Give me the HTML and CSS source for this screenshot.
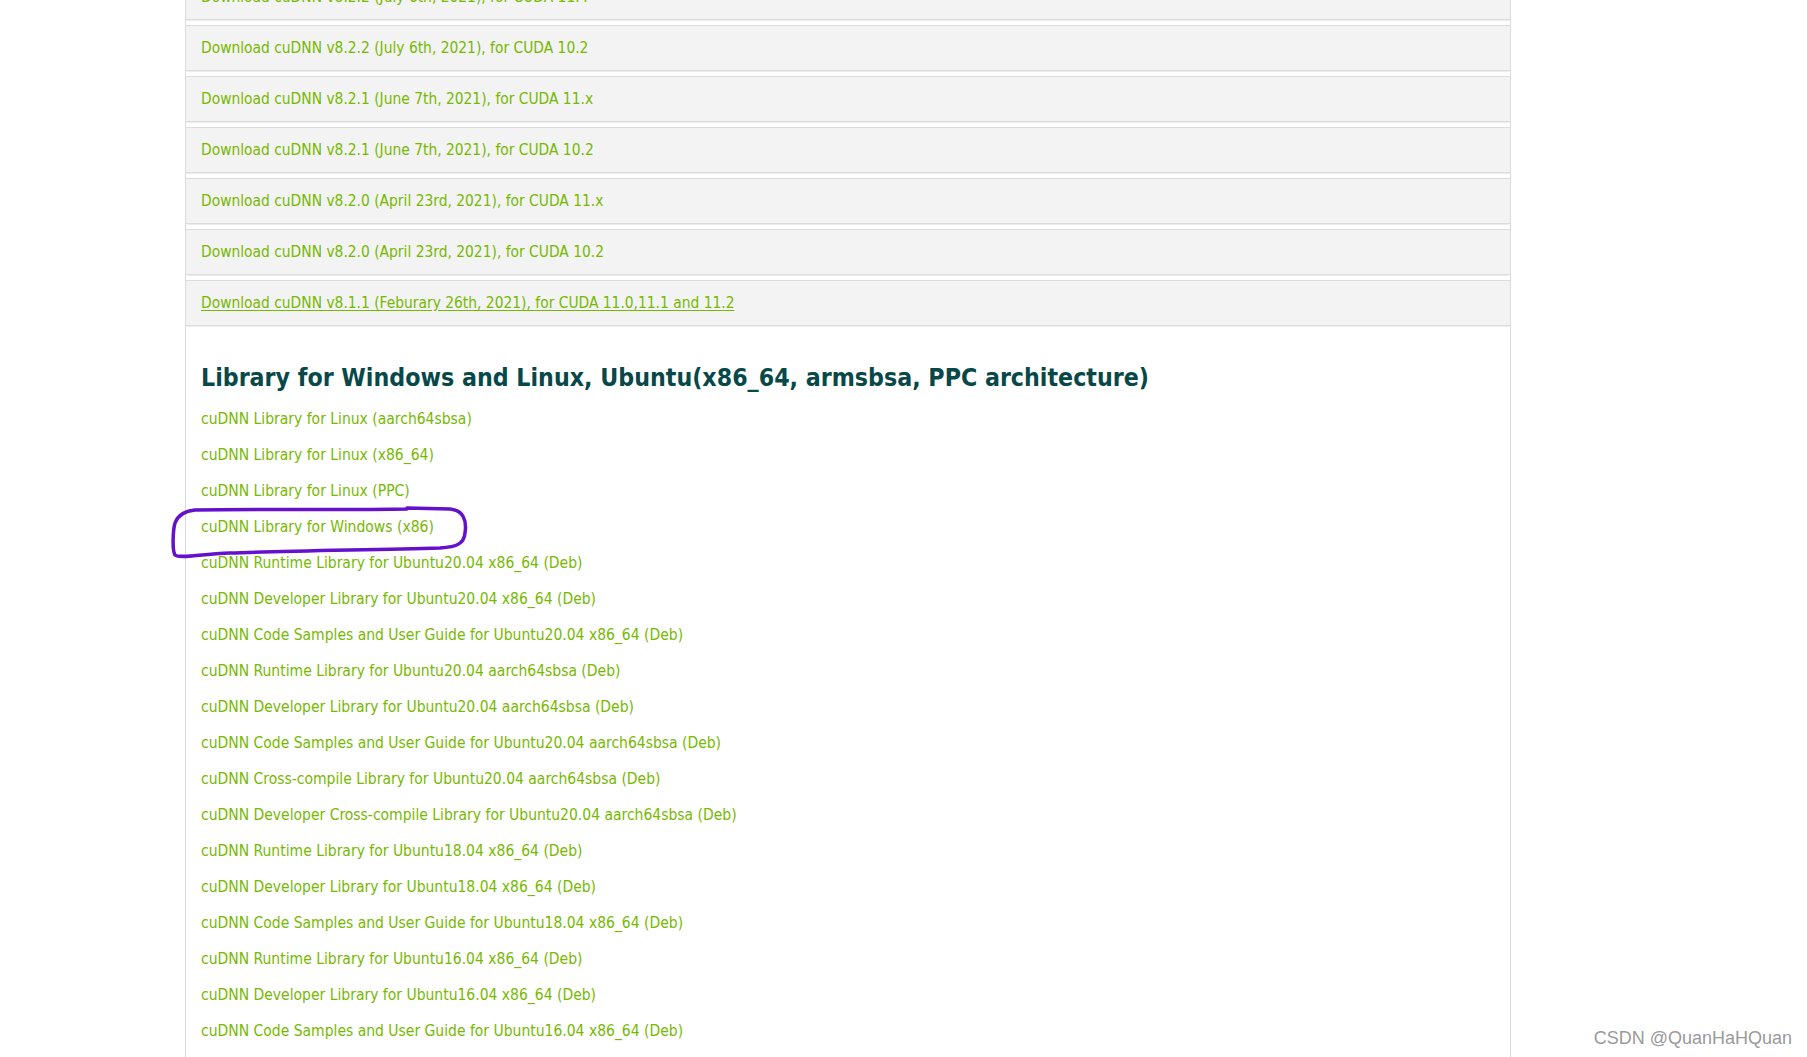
FILE: index.html
```html
<!DOCTYPE html>
<html lang="en">
<head>
<meta charset="utf-8">
<title>cuDNN Archive</title>
<link rel="stylesheet" href="styles.css">
</head>
<body>
<div class="page">
  <div class="panel">
    <div class="cards">
      <a class="card">Download cuDNN v8.2.2 (July 6th, 2021), for CUDA 11.4</a>
      <a class="card">Download cuDNN v8.2.2 (July 6th, 2021), for CUDA 10.2</a>
      <a class="card">Download cuDNN v8.2.1 (June 7th, 2021), for CUDA 11.x</a>
      <a class="card">Download cuDNN v8.2.1 (June 7th, 2021), for CUDA 10.2</a>
      <a class="card">Download cuDNN v8.2.0 (April 23rd, 2021), for CUDA 11.x</a>
      <a class="card">Download cuDNN v8.2.0 (April 23rd, 2021), for CUDA 10.2</a>
      <a class="card card-hover">Download cuDNN v8.1.1 (Feburary 26th, 2021), for CUDA 11.0,11.1 and 11.2</a>
    </div>
    <section class="library">
      <h2 class="library-title">Library for Windows and Linux, Ubuntu(x86_64, armsbsa, PPC architecture)</h2>
      <ul class="links">
        <li><a>cuDNN Library for Linux (aarch64sbsa)</a></li>
        <li><a>cuDNN Library for Linux (x86_64)</a></li>
        <li><a>cuDNN Library for Linux (PPC)</a></li>
        <li><a>cuDNN Library for Windows (x86)</a></li>
        <li><a>cuDNN Runtime Library for Ubuntu20.04 x86_64 (Deb)</a></li>
        <li><a>cuDNN Developer Library for Ubuntu20.04 x86_64 (Deb)</a></li>
        <li><a>cuDNN Code Samples and User Guide for Ubuntu20.04 x86_64 (Deb)</a></li>
        <li><a>cuDNN Runtime Library for Ubuntu20.04 aarch64sbsa (Deb)</a></li>
        <li><a>cuDNN Developer Library for Ubuntu20.04 aarch64sbsa (Deb)</a></li>
        <li><a>cuDNN Code Samples and User Guide for Ubuntu20.04 aarch64sbsa (Deb)</a></li>
        <li><a>cuDNN Cross-compile Library for Ubuntu20.04 aarch64sbsa (Deb)</a></li>
        <li><a>cuDNN Developer Cross-compile Library for Ubuntu20.04 aarch64sbsa (Deb)</a></li>
        <li><a>cuDNN Runtime Library for Ubuntu18.04 x86_64 (Deb)</a></li>
        <li><a>cuDNN Developer Library for Ubuntu18.04 x86_64 (Deb)</a></li>
        <li><a>cuDNN Code Samples and User Guide for Ubuntu18.04 x86_64 (Deb)</a></li>
        <li><a>cuDNN Runtime Library for Ubuntu16.04 x86_64 (Deb)</a></li>
        <li><a>cuDNN Developer Library for Ubuntu16.04 x86_64 (Deb)</a></li>
        <li><a>cuDNN Code Samples and User Guide for Ubuntu16.04 x86_64 (Deb)</a></li>
      </ul>
    </section>
  </div>
  <svg class="annotation" width="330" height="80" viewBox="0 0 330 80" aria-hidden="true">
    <path d="M247 13 L290 14 C303 15 307 25 305 38 C304 48 298 52 280 53 C200 55 120 56 70 58 C40 59 20 64 15 60 C12 55 13 35 15 28 C18 20 24 16 35 15 C100 14 200 15 247 14" fill="none" stroke="#6410cc" stroke-width="3.5" stroke-linecap="round" stroke-linejoin="round"/>
  </svg>
  <div class="watermark">CSDN @QuanHaHQuan</div>
</div>
</body>
</html>
```

FILE: styles.css
```css
* {
  box-sizing: border-box;
}

html,
body {
  margin: 0;
  padding: 0;
  background: #ffffff;
}

.page {
  position: relative;
  width: 1807px;
  height: 1057px;
  overflow: hidden;
  font-family: "DejaVu Sans Condensed", "Liberation Sans Narrow", "Liberation Sans", sans-serif;
  font-stretch: condensed;
}

.panel {
  margin-top: -26px;
  margin-left: 185px;
  width: 1326px;
  min-height: 1200px;
  border-left: 1px solid #d9d9d9;
  border-right: 1px solid #d9d9d9;
  background: #ffffff;
}

.cards {
  display: flex;
  flex-direction: column;
  gap: 5px;
  margin: 0 -1px;
}

.card {
  display: flex;
  align-items: center;
  height: 46px;
  padding-left: 15px;
  background: #f3f3f3;
  border: 1px solid #dcdcdc;
  box-shadow: 0 1px 0 #ececec;
  color: #76b900;
  font-size: 15.4px;
  text-decoration: none;
}

.card-hover {
  text-decoration: underline;
  text-underline-offset: 2px;
}

.library {
  padding-left: 15px;
}

.library-title {
  margin: 37px 0 8px;
  font-size: 24.7px;
  line-height: 30px;
  font-weight: 700;
  color: #084848;
}

.links {
  list-style: none;
  margin: 0;
  padding: 0;
}

.links li {
  height: 36px;
  line-height: 36px;
  font-size: 15.5px;
}

.links a {
  color: #76b900;
  text-decoration: none;
}

.annotation {
  position: absolute;
  left: 160px;
  top: 495px;
}

.watermark {
  position: absolute;
  right: 15px;
  bottom: 8px;
  font-family: "Liberation Sans", Arial, sans-serif;
  font-stretch: normal;
  font-size: 18px;
  color: #9a9a9a;
  text-shadow: 0 0 1px #ffffff;
}
```
